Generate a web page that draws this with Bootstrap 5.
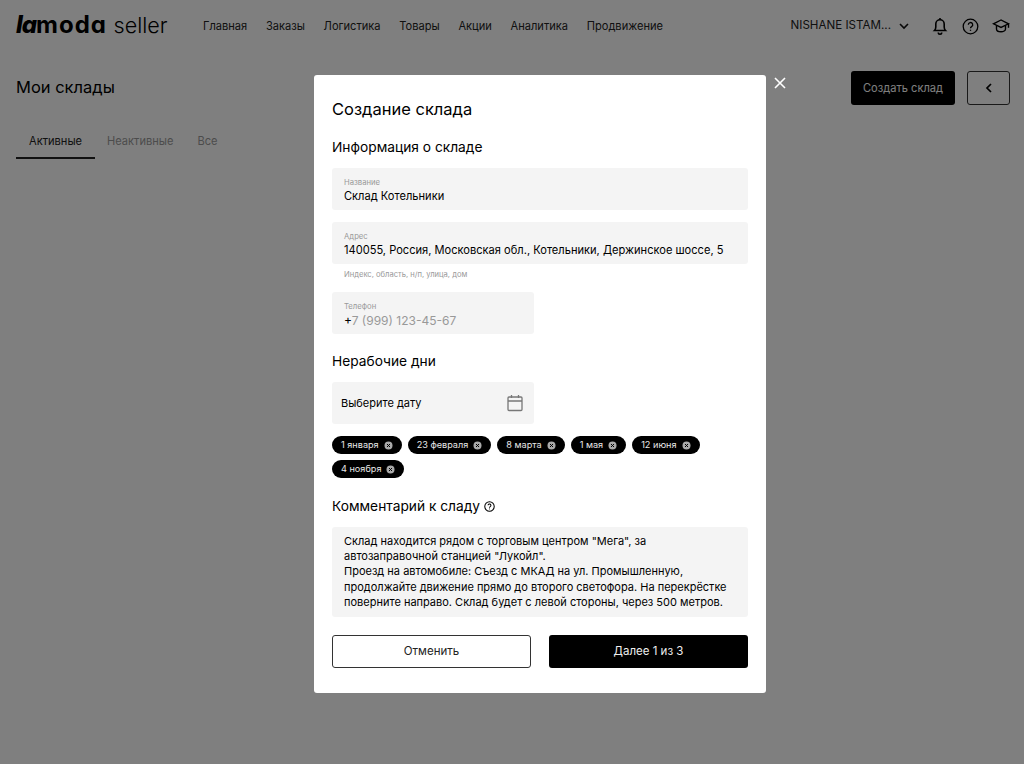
<!DOCTYPE html>
<html lang="ru">
<head>
  <meta charset="UTF-8">
  <title>lamoda seller</title>
  <link href="https://cdn.jsdelivr.net/npm/bootstrap@5.3.0/dist/css/bootstrap.min.css" rel="stylesheet">
  <style>
    html, body { height: 100%; }
    body { font-family: Inter, "Noto Sans", sans-serif; color: #000; background: #fff; overflow: hidden; }
    .top-bar { height: 52px; padding: 0 14px 0 16px; }
    .logo { width: 187px; line-height: 52px; white-space: nowrap; }
    .logo-brand { font-size: 24px; font-weight: 700; letter-spacing: 1px; font-feature-settings: "cv11"; }
    .logo-brand i { font-weight: 800; letter-spacing: -1px; }
    .logo-seller { font-size: 21.6px; font-weight: 300; margin-left: 2px; }
    .top-link { font-size: 11.1px; color: #222; text-decoration: none; white-space: nowrap; }
    .top-links { gap: 18.7px; }
    .seller-name { font-size: 11.6px; color: #222; white-space: nowrap; }
    .icon-chevron { margin-left: 7px; }
    .icon-bell { margin-left: 22px; }
    .icon-help { margin-left: 14px; }
    .icon-hat { margin-left: 13px; }
    .page-head { padding: 19px 14px 0 16px; }
    .page-title { font-size: 16.5px; font-weight: 400; margin: 0; }
    .btn-create { width: 104px; height: 34px; background: #000; color: #fff; border: 0; border-radius: 3px; font-size: 11.1px; padding: 0; }
    .btn-back { width: 43px; height: 34px; border: 1px solid #333; border-radius: 3px; background: transparent; padding: 0; margin-left: 12px; }
    .tabs-row { margin: 26px 0 0 16px; }
    .tab-item { font-size: 11.1px; color: #999; padding: 2px 12px 0; height: 28px; }
    .tab-item.is-on { color: #222; border-bottom: 2px solid #222; width: 79px; text-align: center; }
    .shade { position: fixed; inset: 0; background: rgba(0,0,0,.5); }
    .dialog-box { position: absolute; left: 314px; top: 75px; width: 452px; height: 618px; background: #fff; border-radius: 3px; padding: 23px 18px 0; }
    .dialog-close { position: absolute; left: 773px; top: 76px; width: 14px; height: 14px; padding: 0; border: 0; background: none; line-height: 0; }
    .dialog-title { font-size: 16.5px; font-weight: 400; line-height: 22px; margin: 0 0 18px; }
    .sect-title { font-size: 13.75px; font-weight: 400; line-height: 18px; margin: 0; }
    .sect-days { margin-top: 18px; }
    .sect-comment { margin-top: 19px; }
    .field-box { background: #f4f4f4; border-radius: 3px; height: 42px; padding: 10px 12px 0; margin-top: 12px; }
    .field-label { font-size: 7.7px; line-height: 10px; color: #999; }
    .field-value { font-size: 11.1px; line-height: 17px; white-space: nowrap; }
    .field-phone { width: 202px; margin-top: 12px; }
    .field-phone .field-value { font-size: 12px; }
    .field-hint { font-size: 7.6px; line-height: 10px; color: #999; padding: 6px 12px 0; }
    .ph-text { color: #999; }
    .date-box { height: 42px; background: #f4f4f4; border-radius: 3px; width: 202px; padding: 0 10px 0 9px; font-size: 11px; margin-top: 12px; }
    .chips-wrap { width: 416px; gap: 6px; margin-top: 12px; }
    .chip-item { height: 18px; background: #000; color: #e8e8e8; border-radius: 9px; font-size: 9.15px; padding: 0 9px; gap: 5px; white-space: nowrap; }
    .comment-box { background: #f4f4f4; border-radius: 3px; height: 90px; padding: 7px 12px 0; font-size: 11px; line-height: 15.2px; margin-top: 12px; white-space: nowrap; }
    .dialog-actions { margin-top: 18px; }
    .btn-cancel, .btn-next { width: 199px; height: 33px; border-radius: 3px; font-size: 11.5px; padding: 0; }
    .btn-cancel { background: #fff; border: 1px solid #333; color: #222; }
    .btn-next { background: #000; border: 0; color: #eee; }
  </style>
</head>
<body>
  <header class="top-bar d-flex align-items-center">
    <div class="logo"><span class="logo-brand"><i>la</i>moda</span> <span class="logo-seller">seller</span></div>
    <nav class="top-links d-flex flex-grow-1">
      <a class="top-link" href="#">Главная</a>
      <a class="top-link" href="#">Заказы</a>
      <a class="top-link" href="#">Логистика</a>
      <a class="top-link" href="#">Товары</a>
      <a class="top-link" href="#">Акции</a>
      <a class="top-link" href="#">Аналитика</a>
      <a class="top-link" href="#">Продвижение</a>
    </nav>
    <span class="seller-name">NISHANE ISTAM...</span>
    <svg class="icon-chevron" width="12" height="12" viewBox="0 0 12 12" fill="none" stroke="#111" stroke-width="1.6"><path d="M2 4l4 4 4-4"/></svg>
    <svg class="icon-bell" width="16" height="18" viewBox="0 0 16 18" fill="none" stroke="#000" stroke-width="1.6"><path d="M2.500 13.500c1-1 1.300-2 1.300-3.500V7a4.200 4.200 0 0 1 8.400 0v3c0 1.500.3 2.500 1.300 3.500z"/><path d="M8 1v1.500M6.300 15.500a1.700 1.700 0 0 0 3.400 0"/></svg>
    <svg class="icon-help" width="17" height="17" viewBox="0 0 17 17" fill="none" stroke="#000" stroke-width="1.3"><circle cx="8.500" cy="8.500" r="7.300"/><path d="M6.300 6.700a2.200 2.200 0 1 1 3.300 1.900c-.8.500-1.100.9-1.100 1.700"/><path d="M8.500 11.700v1.200"/></svg>
    <svg class="icon-hat" width="18" height="16" viewBox="0 0 18 16" fill="none" stroke="#000" stroke-width="1.4"><path d="M9 2L1.500 5.800 9 9.500l7.500-3.700z"/><path d="M4.500 7.500v3.500c0 1.600 2 2.800 4.500 2.800s4.500-1.200 4.500-2.800V7.500"/><path d="M16.500 5.800v4"/></svg>
  </header>

  <section class="page-head d-flex align-items-center">
    <h1 class="page-title flex-grow-1">Мои склады</h1>
    <button class="btn-create" type="button">Создать склад</button>
    <button class="btn-back d-flex align-items-center justify-content-center" type="button">
      <svg width="10" height="12" viewBox="0 0 10 12" fill="none" stroke="#000" stroke-width="1.7"><path d="M7 2L3 6l4 4"/></svg>
    </button>
  </section>

  <div class="tabs-row d-flex">
    <div class="tab-item is-on">Активные</div>
    <div class="tab-item">Неактивные</div>
    <div class="tab-item">Все</div>
  </div>

  <div class="shade">
    <div class="dialog-box">
      <h2 class="dialog-title">Создание склада</h2>
      <h3 class="sect-title">Информация о складе</h3>
      <div class="field-box">
        <div class="field-label">Название</div>
        <div class="field-value">Склад Котельники</div>
      </div>
      <div class="field-box">
        <div class="field-label">Адрес</div>
        <div class="field-value">140055, Россия, Московская обл., Котельники, Держинское шоссе, 5</div>
      </div>
      <div class="field-hint">Индекс, область, н/п, улица, дом</div>
      <div class="field-box field-phone">
        <div class="field-label">Телефон</div>
        <div class="field-value">+<span class="ph-text">7 (999) 123-45-67</span></div>
      </div>
      <h3 class="sect-title sect-days">Нерабочие дни</h3>
      <div class="date-box d-flex align-items-center justify-content-between">
        <span>Выберите дату</span>
        <svg width="18" height="18" viewBox="0 0 18 18" fill="none" stroke="#777" stroke-width="1.3"><rect x="2" y="3" width="14" height="13.5" rx="1"/><path d="M2 7h14M5.500 1v3M12.500 1v3"/></svg>
      </div>
      <div class="chips-wrap d-flex flex-wrap">
        <span class="chip-item d-inline-flex align-items-center">1 января <svg width="9" height="9" viewBox="0 0 9 9"><circle cx="4.500" cy="4.500" r="4" fill="#aaa"/><path d="M3 3l3 3M6 3L3 6" stroke="#000"/></svg></span>
        <span class="chip-item d-inline-flex align-items-center">23 февраля <svg width="9" height="9" viewBox="0 0 9 9"><circle cx="4.500" cy="4.500" r="4" fill="#aaa"/><path d="M3 3l3 3M6 3L3 6" stroke="#000"/></svg></span>
        <span class="chip-item d-inline-flex align-items-center">8 марта <svg width="9" height="9" viewBox="0 0 9 9"><circle cx="4.500" cy="4.500" r="4" fill="#aaa"/><path d="M3 3l3 3M6 3L3 6" stroke="#000"/></svg></span>
        <span class="chip-item d-inline-flex align-items-center">1 мая <svg width="9" height="9" viewBox="0 0 9 9"><circle cx="4.500" cy="4.500" r="4" fill="#aaa"/><path d="M3 3l3 3M6 3L3 6" stroke="#000"/></svg></span>
        <span class="chip-item d-inline-flex align-items-center">12 июня <svg width="9" height="9" viewBox="0 0 9 9"><circle cx="4.500" cy="4.500" r="4" fill="#aaa"/><path d="M3 3l3 3M6 3L3 6" stroke="#000"/></svg></span>
        <span class="chip-item d-inline-flex align-items-center">4 ноября <svg width="9" height="9" viewBox="0 0 9 9"><circle cx="4.500" cy="4.500" r="4" fill="#aaa"/><path d="M3 3l3 3M6 3L3 6" stroke="#000"/></svg></span>
      </div>
      <h3 class="sect-title sect-comment d-flex align-items-center gap-1">Комментарий к сладу
        <svg width="11" height="11" viewBox="0 0 17 17" fill="none" stroke="#000" stroke-width="1.6"><circle cx="8.500" cy="8.500" r="7.300"/><path d="M6.300 6.700a2.200 2.200 0 1 1 3.300 1.900c-.8.500-1.100.9-1.100 1.700"/><path d="M8.500 11.700v1.200"/></svg>
      </h3>
      <div class="comment-box">Склад находится рядом с торговым центром "Мега", за<br>автозаправочной станцией "Лукойл".<br>Проезд на автомобиле: Съезд с МКАД на ул. Промышленную,<br>продолжайте движение прямо до второго светофора. На перекрёстке<br>поверните направо. Склад будет с левой стороны, через 500 метров.</div>
      <div class="dialog-actions d-flex justify-content-between">
        <button class="btn-cancel" type="button">Отменить</button>
        <button class="btn-next" type="button">Далее 1 из 3</button>
      </div>
    </div>
    <button class="dialog-close" type="button" aria-label="Закрыть">
      <svg width="14" height="14" viewBox="0 0 14 14" stroke="#fff" stroke-width="1.6"><path d="M2 2l10 10M12 2L2 12"/></svg>
    </button>
  </div>
</body>
</html>
